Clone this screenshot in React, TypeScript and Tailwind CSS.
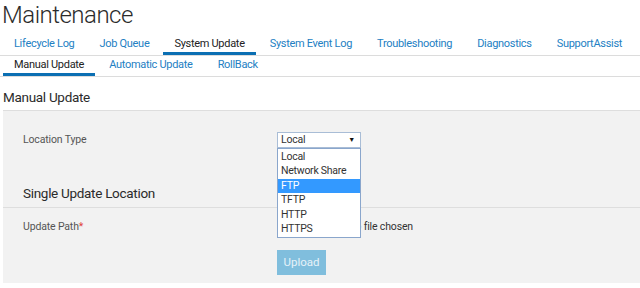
import React from 'react';

const topTabs = [
  'Lifecycle Log',
  'Job Queue',
  'System Update',
  'System Event Log',
  'Troubleshooting',
  'Diagnostics',
  'SupportAssist',
];

const subTabs = ['Manual Update', 'Automatic Update', 'RollBack'];

const options = ['Local', 'Network Share', 'FTP', 'TFTP', 'HTTP', 'HTTPS'];

const App: React.FC = () => {
  return (
    <div
      className="relative w-[640px] h-[288px] overflow-hidden bg-white text-[#333]"
      style={{ fontFamily: 'Roboto, "Liberation Sans", sans-serif' }}
    >
      {/* page title */}
      <div className="h-[33px] pl-[2px] text-[24px] leading-[30px] font-light tracking-[-0.5px] text-[#2b2b2b]">
        Maintenance
      </div>

      {/* main tabs */}
      <div className="flex h-[23px] gap-[3px] pl-[3px] border-b border-[#dcdcdc]">
        {topTabs.map((t) => (
          <div
            key={t}
            className={
              t === 'System Update'
                ? 'shrink-0 whitespace-nowrap h-[22px] px-[11px] pt-[4px] text-[11px] leading-[14px] tracking-[-0.3px] text-[#222] border-b-[3px] border-[#0b6fb3]'
                : 'shrink-0 whitespace-nowrap h-[22px] px-[11px] pt-[4px] text-[11px] leading-[14px] tracking-[-0.3px] text-[#2380c3]'
            }
          >
            {t}
          </div>
        ))}
      </div>

      {/* sub tabs */}
      <div className="flex h-[21px] gap-[3px] pl-[3px] border-b border-[#dcdcdc]">
        {subTabs.map((t) => (
          <div
            key={t}
            className={
              t === 'Manual Update'
                ? 'shrink-0 whitespace-nowrap h-[20px] px-[11px] pt-[2px] text-[11px] leading-[14px] tracking-[-0.3px] text-[#222] border-b-[3px] border-[#0b6fb3]'
                : 'shrink-0 whitespace-nowrap h-[20px] px-[11px] pt-[2px] text-[11px] leading-[14px] tracking-[-0.3px] text-[#2380c3]'
            }
          >
            {t}
          </div>
        ))}
      </div>

      {/* section heading */}
      <div className="h-[33px] pl-[3px] pt-[11px] text-[13.5px] leading-[18px] tracking-[-0.3px] text-[#2b2b2b]">
        Manual Update
      </div>

      {/* panel */}
      <div className="ml-[3px] h-[173px] bg-[#f2f2f2] border-t border-[#dedede]">
        <div className="flex items-center pt-[21px] h-[37px]">
          <div className="w-[274px] pl-[20px] text-[10.5px] tracking-[-0.15px] text-[#555]">Location Type</div>
          <div className="relative">
            <div className="flex items-center justify-between w-[84px] h-[16px] bg-white border border-[#a9bdd6] pl-[3px] pr-[5px] text-[10.5px] leading-[14px] tracking-[-0.2px] text-[#333]">
              <span>Local</span>
              <span className="text-[7px] text-[#111]">▼</span>
            </div>
            {/* open dropdown list */}
            <div className="absolute left-0 top-[16px] w-[84px] bg-white border border-[#8aa6cc] py-[0.5px] z-10">
              {options.map((o) => (
                <div
                  key={o}
                  className={
                    o === 'FTP'
                      ? 'h-[14.5px] pl-[3px] text-[10.5px] leading-[14.5px] tracking-[-0.25px] bg-[#3399ff] text-white'
                      : 'h-[14.5px] pl-[3px] text-[10.5px] leading-[14.5px] tracking-[-0.25px] text-[#333]'
                  }
                >
                  {o}
                </div>
              ))}
            </div>
          </div>
        </div>

        <div className="h-[59px] pl-[20px] pt-[36px] text-[13.5px] leading-[18px] tracking-[-0.3px] text-[#2b2b2b]">
          Single Update Location
        </div>
        <div className="border-t border-[#dedede]" />

        <div className="flex items-center h-[38px]">
          <div className="w-[274px] pl-[20px] text-[10.5px] tracking-[-0.15px] text-[#555]">
            Update Path<span className="text-[#e0403a]">*</span>
          </div>
          <div className="flex items-center text-[10.5px] tracking-[-0.15px] text-[#333]">
            <div className="w-[66px] h-[18px] border border-[#aaa] bg-[#eee] text-center leading-[16px]">
              Choose File
            </div>
            <span className="ml-[5px]">No file chosen</span>
          </div>
        </div>

        <div className="flex pl-[274px] pt-[4px]">
          <div className="w-[49px] h-[25px] bg-[#80bedd] text-[11.5px] leading-[25px] text-center text-[#e6f2f9]">
            Upload
          </div>
        </div>
      </div>
    </div>
  );
};

export default App;
